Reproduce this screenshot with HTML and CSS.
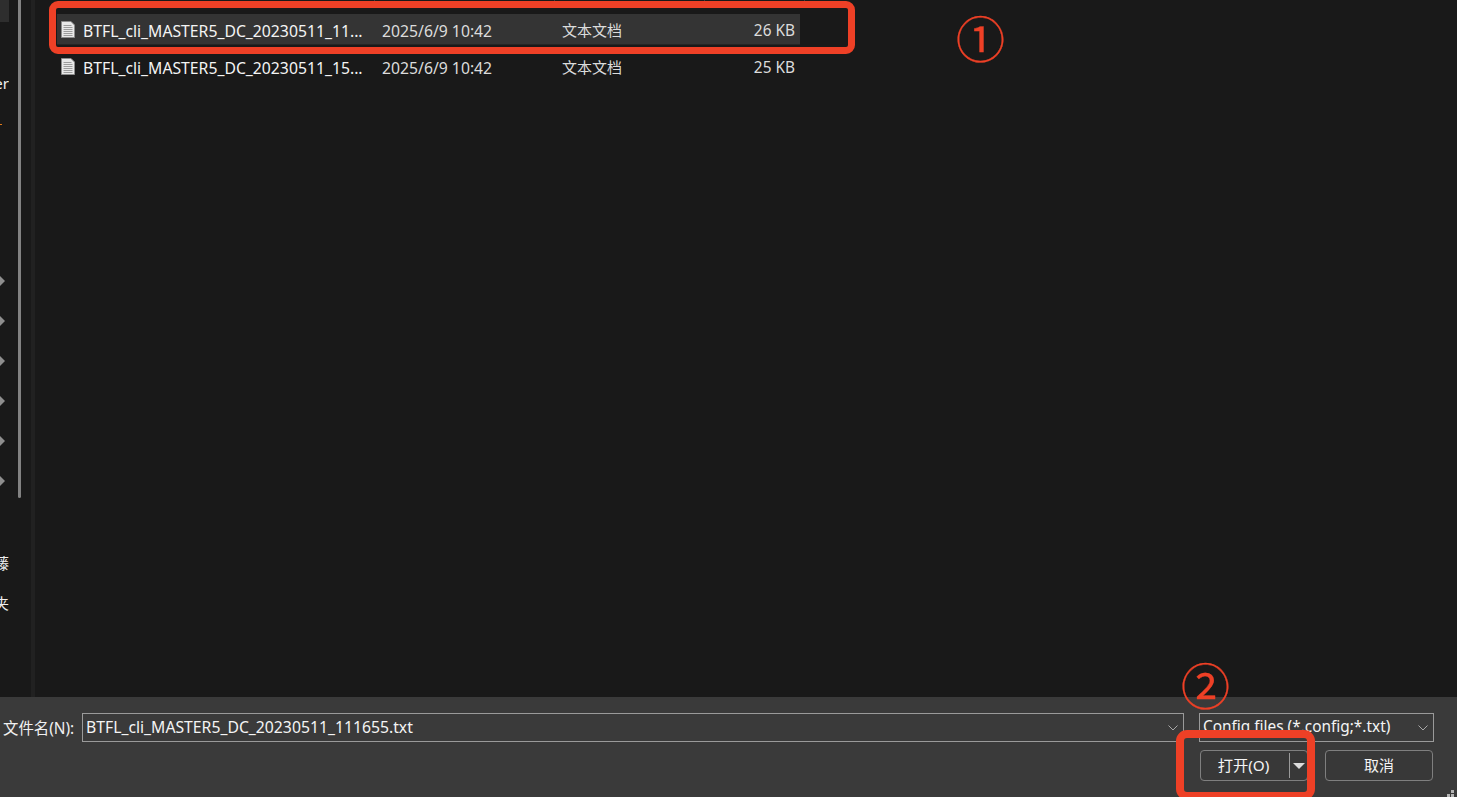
FILE: index.html
```html
<!DOCTYPE html>
<html lang="zh-CN">
<head>
<meta charset="utf-8">
<title>打开文件</title>
<link rel="stylesheet" href="styles.css">
</head>
<body>
<div class="dialog">
  <main class="browser">
    <aside class="nav">
      <div class="nav-list">
        <div class="nav-top"></div>
        <div class="nav-item nav-er">er</div>
        <div class="nav-orange"></div>
        <div class="nav-arrows">
          <span class="arrow"></span><span class="arrow"></span><span class="arrow"></span>
          <span class="arrow"></span><span class="arrow"></span><span class="arrow"></span>
        </div>
        <div class="nav-item nav-cjk">藤</div>
        <div class="nav-item nav-cjk">夹</div>
      </div>
      <div class="nav-scroll"></div>
    </aside>
    <div class="splitter"></div>
    <section class="files">
      <div class="header-ticks"><i class="t1"></i><i class="t2"></i><i class="t3"></i><i class="t4"></i></div>
      <div class="row selected">
        <svg class="doc" viewBox="0 0 14 17" width="14" height="17"><path d="M.5.5h9.500l3.500 3.500v12.500h-13z" fill="#e8e8e8" stroke="#8c8c8c"/><path d="M2.500 4.500h8M2.500 6.500h9M2.500 8.500h9M2.500 10.500h9M2.500 12.500h9M2.500 14.500h9" stroke="#9c9c9c"/></svg>
        <span class="name">BTFL_cli_MASTER5_DC_20230511_11...</span>
        <span class="date">2025/6/9 10:42</span>
        <span class="type">文本文档</span>
        <span class="size">26 KB</span>
      </div>
      <div class="row">
        <svg class="doc" viewBox="0 0 14 17" width="14" height="17"><path d="M.5.5h9.500l3.500 3.500v12.500h-13z" fill="#e8e8e8" stroke="#8c8c8c"/><path d="M2.500 4.500h8M2.500 6.500h9M2.500 8.500h9M2.500 10.500h9M2.500 12.500h9M2.500 14.500h9" stroke="#9c9c9c"/></svg>
        <span class="name">BTFL_cli_MASTER5_DC_20230511_15...</span>
        <span class="date">2025/6/9 10:42</span>
        <span class="type">文本文档</span>
        <span class="size">25 KB</span>
      </div>
    </section>
  </main>
  <footer class="footer">
    <div class="line line-top">
      <label class="label">文件名(N):</label>
      <div class="field name-field"><span>BTFL_cli_MASTER5_DC_20230511_111655.txt</span><svg class="chev" viewBox="0 0 10 6" width="10" height="6"><path d="M.5.500l4.500 4.500 4.500-4.500" fill="none" stroke="#a8a8a8"/></svg></div>
      <div class="field type-field"><span>Config files (*.config;*.txt)</span><svg class="chev" viewBox="0 0 10 6" width="10" height="6"><path d="M.5.500l4.500 4.500 4.500-4.500" fill="none" stroke="#a8a8a8"/></svg></div>
    </div>
    <div class="line line-bottom">
      <div class="btn open"><span class="open-text">打开(O)</span><span class="open-sep"></span><span class="open-caret"></span></div>
      <div class="btn cancel">取消</div>
    </div>
  </footer>
  <div class="mark mark-row"></div>
  <div class="mark mark-btn"></div>
  <div class="num num1">①</div>
  <div class="num num2">②</div>
  <div class="grip"><i></i><i></i><i></i></div>
</div>
</body>
</html>
```
FILE: styles.css
```css
* { box-sizing: border-box; }
html, body { margin: 0; height: 100%; background: #191919; overflow: hidden; }
body { font-family: "Noto Sans", "Noto Sans CJK SC", sans-serif; font-size: 15px; color: #f0f0f0; }
.dialog { position: relative; width: 1457px; height: 797px; display: flex; flex-direction: column; overflow: hidden; }
.browser { height: 697px; display: flex; background: #191919; }

.nav { width: 31px; display: flex; flex: none; position: relative; }
.nav-list { width: 18px; flex: none; overflow: hidden; display: flex; flex-direction: column; }
.nav-top { width: 9px; height: 22px; background: #2e2e2e; flex: none; margin-bottom: 51px; }
.nav-item { width: 9px; height: 20px; line-height: 20px; flex: none; overflow: hidden; direction: rtl; white-space: nowrap; color: #f0f0f0; }
.nav-orange { width: 2px; height: 1px; background: #e07a1a; margin-top: 31px; flex: none; }
.nav-arrows { display: flex; flex-direction: column; gap: 30px; margin-top: 151px; flex: none; }
.arrow { display: block; width: 5px; height: 10px; background: #8e8e8e; clip-path: polygon(0 0, 100% 50%, 0 100%); }
.nav-arrows + .nav-cjk { margin-top: 67px; }
.nav-cjk + .nav-cjk { margin-top: 20px; }
.nav-scroll { width: 3px; height: 498px; background: #828282; border-radius: 0 0 2px 2px; flex: none; }

.splitter { width: 4px; flex: none; background: #212121; }
.files { flex: 1; position: relative; padding-top: 14px; padding-left: 22px; }
.header-ticks i { position: absolute; top: 0; width: 1px; height: 2px; background: #3c3c3c; }
.t1 { left: 339px; } .t2 { left: 519px; } .t3 { left: 669px; } .t4 { left: 769px; }

.row { width: 743px; height: 31px; margin-bottom: 6px; padding-top: 2px; display: flex; align-items: center; white-space: nowrap; line-height: 24px; }
.row.selected { background: #343434; border-bottom: 1px solid #252525; padding-top: 3px; }
.doc { flex: none; margin-left: 4px; margin-right: 8px; margin-top: -3px; }
.name { width: 299px; flex: none; font-size: 15.75px; color: #f4f4f4; }
.date { width: 180px; flex: none; font-size: 15.75px; color: #dcdcdc; }
.type { width: 120px; flex: none; color: #dcdcdc; margin-bottom: 2px; }
.size { width: 113px; flex: none; text-align: right; font-size: 15.4px; color: #dcdcdc; }

.footer { height: 100px; background: #3a3a3a; padding: 16px 23px 0 0; flex: none; }
.line { display: flex; align-items: center; }
.line-top { height: 29px; }
.label { width: 82px; padding-left: 3px; flex: none; white-space: nowrap; font-size: 15.4px; color: #f0f0f0; }
.field { height: 29px; border: 1px solid #9a9a9a; display: flex; align-items: center; justify-content: space-between; white-space: nowrap; color: #f4f4f4; line-height: 24px; }
.field span { margin-bottom: 2px; }
.name-field { width: 1102px; padding: 0 5px 0 3px; font-size: 15.75px; }
.type-field { width: 235px; margin-left: 15px; padding: 0 5px 0 3px; font-size: 15.4px; }
.line-bottom { margin-top: 8px; justify-content: flex-end; gap: 17px; padding-right: 1px; }
.btn { height: 31px; border: 1px solid #7f7f7f; border-radius: 4px; display: flex; align-items: center; justify-content: center; color: #f4f4f4; background: #383838; line-height: 27px; }
.open { width: 108px; justify-content: flex-start; }
.open-text { width: 88px; text-align: center; font-size: 15.3px; padding-right: 3px; }
.open-sep { width: 1px; height: 25px; background: #9a9a9a; }
.open-caret { margin-left: 3px; width: 0; height: 0; border-top: 6px solid #dcdcdc; border-left: 6px solid transparent; border-right: 6px solid transparent; }
.cancel { width: 108px; }

.mark { position: absolute; border: 7px solid #ee4026; border-radius: 9px; pointer-events: none; }
.mark-row { left: 49px; top: 1px; width: 806px; height: 53px; }
.mark-btn { left: 1176px; top: 730px; width: 139px; height: 70px; border-width: 8px; border-radius: 11px; }
.num { position: absolute; color: #ee4026; font-family: "DejaVu Sans", sans-serif; font-weight: 200; font-size: 49px; line-height: 50px; width: 60px; text-align: center; -webkit-text-stroke: 0.3px #ee4026; }
.num1 { left: 950px; top: 17px; }
.num2 { left: 1175px; top: 664px; }
.grip { position: absolute; left: 1447px; top: 790px; width: 8px; height: 7px; display: grid; grid-template-columns: 3px 3px; grid-template-rows: 3px 3px; gap: 1px; }
.grip i { background: #b4b4b4; }
.grip i:first-child { grid-column: 2; }
```
